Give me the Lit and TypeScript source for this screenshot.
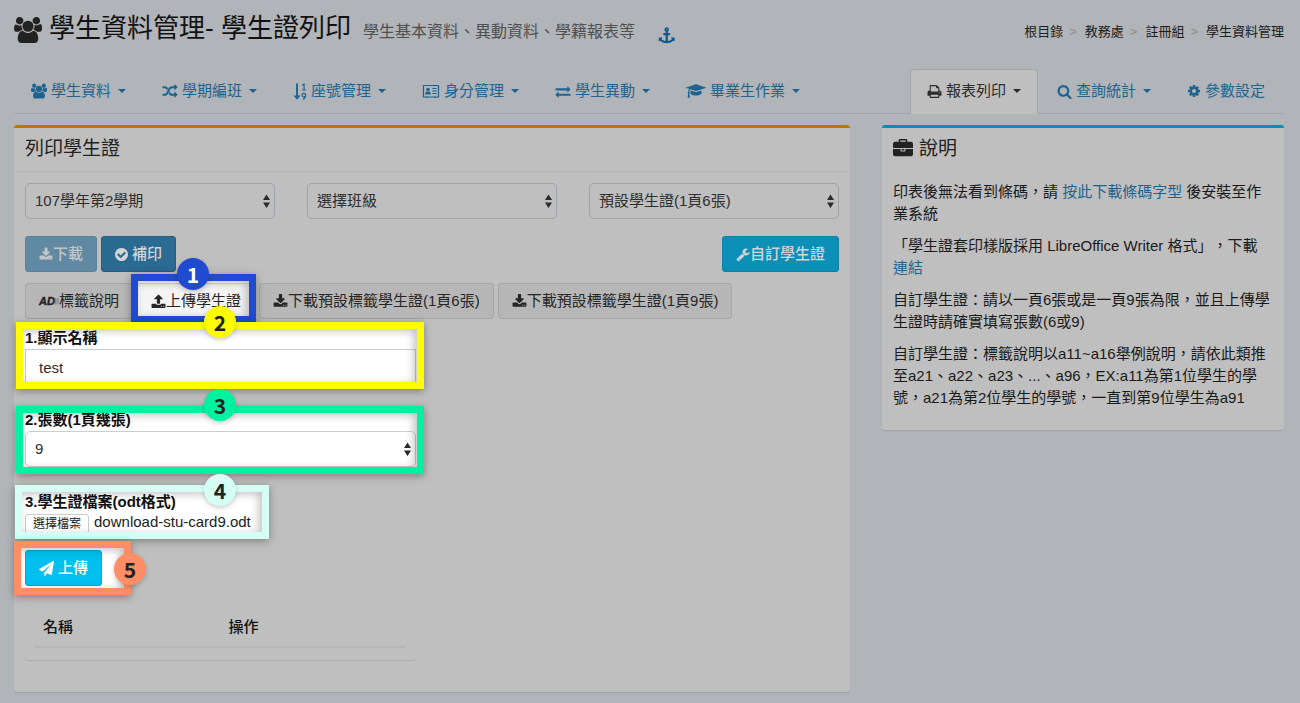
import { LitElement, html, svg, css, nothing } from "lit";
import { customElement, property } from "lit/decorators.js";

interface Glyph {
  w: number;
  h?: number;
  body: unknown;
}

const p = (d: string) => svg`<path d=${d}></path>`;

const GLYPHS: Record<string, Glyph> = {
  users: {
    w: 1920,
    body: p("M593 896q-162 5-265 128h-134q-82 0-138-40.5t-56-118.5q0-353 124-353 6 0 43.5 21t97.5 42.5 119 21.5q67 0 133-23-5 37-5 66 0 159 93 287zm1071 637q0 120-73 189.5t-194 69.5h-874q-121 0-194-69.5t-73-189.5q0-53 3.5-103.5t14-109 26.5-108.5 43-97.5 62-81 85.5-53.5 111.5-20q10 0 43 21.5t73 48 107 48 135 21.5 135-21.5 107-48 73-48 43-21.5q61 0 111.5 20t85.5 53.5 62 81 43 97.5 26.5 108.5 14 109 3.5 103.5zm-1024-1277q0 106-75 181t-181 75-181-75-75-181 75-181 181-75 181 75 75 181zm704 384q0 159-112.5 271.5t-271.5 112.5-271.5-112.5-112.5-271.5 112.5-271.5 271.5-112.5 271.5 112.5 112.5 271.5zm576 225q0 78-56 118.5t-138 40.5h-134q-103-123-265-128 93-128 93-287 0-29-5-66 66 23 133 23 59 0 119-21.5t97.5-42.5 43.5-21q124 0 124 353zm-128-609q0 106-75 181t-181 75-181-75-75-181 75-181 181-75 181 75 75 181z"),
  },
  anchor: {
    w: 1792,
    body: p("M960 256q0-26-19-45t-45-19-45 19-19 45 19 45 45 19 45-19 19-45zm800 960v352q0 22-20 30-8 2-12 2-12 0-23-9l-93-93q-119 143-318.5 226.5t-429.5 83.5-429.5-83.5-318.5-226.5l-93 93q-9 9-23 9-4 0-12-2-20-8-20-30v-352q0-14 9-23t23-9h352q22 0 30 20 8 19-7 35l-100 100q67 91 189.5 153.5t271.5 82.5v-647h-192q-26 0-45-19t-19-45v-128q0-26 19-45t45-19h192v-163q-58-34-93-92.5t-35-128.5q0-106 75-181t181-75 181 75 75 181q0 70-35 128.5t-93 92.5v163h192q26 0 45 19t19 45v128q0 26-19 45t-45 19h-192v647q149-20 271.5-82.5t189.5-153.5l-100-100q-15-16-7-35 8-20 30-20h352q14 0 23 9t9 23z"),
  },
  random: {
    w: 1792,
    body: p("M666 481q-60 92-137 273-22-45-37-72.5t-40.5-63.5-51-56.5-63-35-81.5-14.5h-224q-14 0-23-9t-9-23v-192q0-14 9-23t23-9h224q250 0 410 225zm1126 799q0 14-9 23l-320 320q-9 9-23 9-13 0-22.5-9.5t-9.5-22.5v-192q-32 0-85 .5t-81 1-73-1-71-5-64-10.5-63-18.5-58-28.5-59-40-55-53.5-56-69.5q59-93 136-273 22 45 37 72.5t40.5 63.5 51 56.5 63 35 81.5 14.5h256v-192q0-14 9-23t23-9q12 0 24 10l319 319q9 9 9 23zm0-896q0 14-9 23l-320 320q-9 9-23 9-13 0-22.5-9.5t-9.5-22.5v-192h-256q-48 0-87 15t-69 45-51 61.5-45 77.5q-32 62-78 171-29 66-49.5 111t-54 105-64 100-74 83-90 68.5-106.5 42-128 16.5h-224q-14 0-23-9t-9-23v-192q0-14 9-23t23-9h224q48 0 87-15t69-45 51-61.5 45-77.5q32-62 78-171 29-66 49.5-111t54-105 64-100 74-83 90-68.5 106.5-42 128-16.5h256v-192q0-14 9-23t23-9q12 0 24 10l319 319q9 9 9 23z"),
  },
  sort: {
    w: 13,
    h: 16,
    body: svg`<path d="M2.8 0.5h1.8v11.2h2.4l-3.3 4-3.3-4h2.4z"></path>
      <path d="M8.6 2.2l1.7-1.2v5.6M8.4 6.6h3.8M11.8 11.4a1.7 1.7 0 1 1-3.4 0 1.7 1.7 0 0 1 3.4 0c0 2.400-.8 3.600-2.600 3.700" fill="none" stroke="currentColor" stroke-width="1.1"></path>`,
  },
  idcard: {
    w: 18,
    h: 16,
    body: svg`<path d="M1.500 2.500h15v11.500h-15z" fill="none" stroke="currentColor" stroke-width="1.200" stroke-linejoin="round"></path>
      <circle cx="6" cy="6.600" r="1.800"></circle>
      <path d="M3.200 11.500c0-2 .7-3.100 1.700-3.100.7.5 1.500.5 2.200 0 1 0 1.700 1.100 1.700 3.100z"></path>
      <path d="M10.300 5.500h4.400M10.300 8h4.400M10.300 10.500h4.400" fill="none" stroke="currentColor" stroke-width="1.200"></path>
      <path d="M4 14h2v1h-2zM12 14h2v1h-2z"></path>`,
  },
  exchange: {
    w: 1792,
    body: p("M1792 1184v192q0 13-9.5 22.5t-22.5 9.5h-1376v192q0 13-9.5 22.5t-22.5 9.5q-12 0-24-10l-319-320q-9-9-9-22 0-14 9-23l320-320q9-9 23-9 13 0 22.5 9.5t9.5 22.5v192h1376q13 0 22.5 9.5t9.5 22.5zm0-544q0 14-9 23l-320 320q-9 9-23 9-13 0-22.5-9.5t-9.5-22.5v-192h-1376q-13 0-22.5-9.5t-9.5-22.5v-192q0-13 9.5-22.5t22.5-9.5h1376v-192q0-14 9-23t23-9q12 0 24 10l319 319q9 9 9 23z"),
  },
  graduation: {
    w: 2304,
    body: p("M1774 836l18 316q4 69-82 128t-235 93.5-323 34.5-323-34.5-235-93.5-82-128l18-316 574 181q22 7 48 7t48-7zm530-324q0 23-22 31l-1120 352q-4 1-10 1t-10-1l-652-206q-43 34-71 111.5t-34 178.5q63 36 63 109 0 69-58 107l58 433q2 14-8 25-9 11-24 11h-192q-15 0-24-11-10-11-8-25l58-433q-58-38-58-107 0-73 65-111 11-207 98-330l-333-104q-22-8-22-31t22-31l1120-352q4-1 10-1t10 1l1120 352q22 8 22 31z"),
  },
  print: {
    w: 1792,
    body: p("M448 1536h896v-256h-896v256zm0-640h896v-384h-160q-40 0-68-28t-28-68v-160h-640v640zm1152 64q0-26-19-45t-45-19-45 19-19 45 19 45 45 19 45-19 19-45zm128 0v416q0 13-9.5 22.5t-22.5 9.5h-224v160q0 40-28 68t-68 28h-960q-40 0-68-28t-28-68v-160h-224q-13 0-22.5-9.5t-9.5-22.5v-416q0-79 56.5-135.5t135.5-56.5h64v-544q0-40 28-68t68-28h672q40 0 88 20t76 48l152 152q28 28 48 76t20 88v256h64q79 0 135.5 56.5t56.5 135.5z"),
  },
  search: {
    w: 1792,
    body: p("M1216 832q0-185-131.5-316.5t-316.5-131.5-316.5 131.5-131.5 316.5 131.5 316.5 316.5 131.5 316.5-131.5 131.5-316.5zm512 832q0 52-38 90t-90 38q-54 0-90-38l-343-342q-179 124-399 124-143 0-273.5-55.5t-225-150-150-225-55.5-273.5 55.5-273.5 150-225 225-150 273.5-55.5 273.5 55.5 225 150 150 225 55.5 273.5q0 220-124 399l343 343q37 37 37 90z"),
  },
  cog: {
    w: 1792,
    body: p("M1152 896q0-106-75-181t-181-75-181 75-75 181 75 181 181 75 181-75 75-181zm512-109v222q0 12-8 23t-20 13l-185 28q-19 54-39 91 35 50 107 138 10 12 10 25t-9 23q-27 37-99 108t-94 71q-12 0-26-9l-138-108q-44 23-91 38-16 136-29 186-7 28-36 28h-222q-14 0-24.500-8.500t-11.500-21.500l-28-184q-49-16-90-37l-141 107q-10 9-25 9-14 0-25-11-126-114-165-168-7-10-7-23 0-12 8-23 15-21 51-66.500t54-70.500q-27-50-41-99l-183-27q-13-2-21-12.500t-8-23.500v-222q0-12 8-23t19-13l186-28q14-46 39-92-40-57-107-138-10-12-10-24 0-10 9-23 26-36 98.500-107.500t94.500-71.500q13 0 26 10l138 107q44-23 91-38 16-136 29-186 7-28 36-28h222q14 0 24.500 8.500t11.500 21.500l28 184q49 16 90 37l142-107q9-9 24-9 13 0 25 10 129 119 165 170 7 8 7 22 0 12-8 23-15 21-51 66.500t-54 70.500q26 50 41 98l183 28q13 2 21 12.500t8 23.500z"),
  },
  download: {
    w: 1792,
    body: p("M1344 1344q0-26-19-45t-45-19-45 19-19 45 19 45 45 19 45-19 19-45zm256 0q0-26-19-45t-45-19-45 19-19 45 19 45 45 19 45-19 19-45zm128-224v320q0 40-28 68t-68 28h-1472q-40 0-68-28t-28-68v-320q0-40 28-68t68-28h465l135 136q58 56 136 56t136-56l136-136h464q40 0 68 28t28 68zm-325-569q17 41-14 70l-448 448q-18 19-45 19t-45-19l-448-448q-31-29-14-70 17-39 59-39h256v-448q0-26 19-45t45-19h256q26 0 45 19t19 45v448h256q42 0 59 39z"),
  },
  upload: {
    w: 1792,
    body: p("M1344 1472q0-26-19-45t-45-19-45 19-19 45 19 45 45 19 45-19 19-45zm256 0q0-26-19-45t-45-19-45 19-19 45 19 45 45 19 45-19 19-45zm128-224v320q0 40-28 68t-68 28h-1472q-40 0-68-28t-28-68v-320q0-40 28-68t68-28h427q21 56 70.500 92t110.500 36h256q61 0 110.500-36t70.500-92h427q40 0 68 28t28 68zm-325-648q-17 40-59 40h-256v448q0 26-19 45t-45 19h-256q-26 0-45-19t-19-45v-448h-256q-42 0-59-40-17-39 14-69l448-448q18-19 45-19t45 19l448 448q31 30 14 69z"),
  },
  check: {
    w: 1536,
    h: 1536,
    body: svg`<path transform="translate(-128 -128)" d="M1412 734q0-28-18-46l-91-90q-19-19-45-19t-45 19l-408 407-226-226q-19-19-45-19t-45 19l-91 90q-18 18-18 46 0 27 18 45l362 362q19 19 45 19 27 0 46-19l543-543q18-18 18-45zm252 162q0 209-103 385.500t-279.500 279.500-385.500 103-385.500-103-279.500-279.500-103-385.500 103-385.500 279.500-279.500 385.500-103 385.500 103 279.500 279.500 103 385.500z"></path>`,
  },
  wrench: {
    w: 1792,
    body: p("M448 1472q0-26-19-45t-45-19-45 19-19 45 19 45 45 19 45-19 19-45zm644-420l-682 682q-37 37-90 37-52 0-91-37l-106-108q-38-36-38-90 0-53 38-91l681-681q39 98 114.500 173.500t173.500 114.500zm634-435q0 39-23 106-47 134-164.500 217.500t-258.500 83.500q-185 0-316.500-131.500t-131.500-316.500 131.500-316.500 316.500-131.500q58 0 121.500 16.500t107.500 46.500q16 11 16 28t-16 28l-293 169v224l193 107q5-3 79-48.500t135.500-81 70.500-35.500q15 0 23.500 10t8.500 25z"),
  },
  briefcase: {
    w: 1792,
    body: p("M640 256h512v-128h-512v128zm1152 640v480q0 66-47 113t-113 47h-1472q-66 0-113-47t-47-113v-480h672v160q0 26 19 45t45 19h320q26 0 45-19t19-45v-160h672zm-768 0v128h-256v-128h256zm768-480v384h-1792v-384q0-66 47-113t113-47h352v-160q0-40 28-68t68-28h576q40 0 68 28t28 68v160h352q66 0 113 47t47 113z"),
  },
  plane: {
    w: 1792,
    body: p("M1764 11q33 24 27 64l-256 1536q-5 29-32 45-14 8-31 8-11 0-24-5l-453-185-242 295q-18 23-49 23-13 0-22-4-19-7-30.500-23.500t-11.500-36.500v-349l864-1059-1069 925-395-162q-37-14-40-55-2-40 32-59l1664-960q15-9 32-9 20 0 36 11z"),
  },
  ad: {
    w: 20,
    h: 14,
    body: svg`<text x="0" y="11" font-family="Liberation Sans" font-size="11" font-weight="700" font-style="italic" stroke="currentColor" stroke-width=".5">AD</text>
      <path d="M16.500 4q1.200 3 0 6.500M18.500 4q1.200 3 0 6.500" fill="none" stroke="currentColor" stroke-width="1.200" opacity=".35"></path>`,
  },
};

@customElement("ui-icon")
class UiIcon extends LitElement {
  @property() name = "";

  static styles = css`
    :host { display: inline-flex; flex: none; }
    svg { width: 100%; height: 100%; fill: currentColor; overflow: visible; }
  `;

  render() {
    const g = GLYPHS[this.name];
    return g
      ? html`<svg viewBox="0 0 ${g.w} ${g.h ?? 1792}" aria-hidden="true">${g.body}</svg>`
      : nothing;
  }
}

interface Tab {
  icon: string;
  label: string;
  menu: boolean;
  active?: boolean;
}

const MAIN_TABS: Tab[] = [
  { icon: "users", label: "學生資料", menu: true },
  { icon: "random", label: "學期編班", menu: true },
  { icon: "sort", label: "座號管理", menu: true },
  { icon: "idcard", label: "身分管理", menu: true },
  { icon: "exchange", label: "學生異動", menu: true },
  { icon: "graduation", label: "畢業生作業", menu: true },
];

const TOOL_TABS: Tab[] = [
  { icon: "print", label: "報表列印", menu: true, active: true },
  { icon: "search", label: "查詢統計", menu: true },
  { icon: "cog", label: "參數設定", menu: false },
];

const CRUMBS = ["根目錄", "教務處", "註冊組", "學生資料管理"];

@customElement("app-root")
class AppRoot extends LitElement {
  static styles = css`
    :host {
      display: block;
      min-height: 100vh;
      box-sizing: border-box;
      padding: 13px 16px 10px 14px;
      background: #b1b4b8;
      color: #222;
      font: 15px/22px "Liberation Sans", "Noto Sans CJK TC", sans-serif;
      text-spacing-trim: space-all;
    }
    *, *::before { box-sizing: border-box; }
    h1, h2, p, ul, ol { margin: 0; padding: 0; list-style: none; font-weight: 400; }
    a { color: #1e6390; text-decoration: none; }
    button, input, select { font: inherit; color: inherit; margin: 0; }

    .head { display: flex; align-items: center; gap: 7px; padding-bottom: 22px; }
    .title-icon { width: 28px; height: 26px; }
    .title { font-size: 26px; line-height: 34px; margin: -2px 0; color: #111; display: flex; align-items: baseline; gap: 12px; }
    .title small { font-size: 16px; color: #505050; }
    .anchor { margin: 9px 0 0 17px; height: 16px; line-height: 16px; display: flex; }
    .anchor ui-icon { width: 16px; height: 16px; color: #0f5a8c; }
    .crumbs { margin-left: auto; display: flex; font-size: 13px; padding-top: 4px; }
    .crumbs a { color: #1c1c1c; }
    .crumbs li + li::before { content: ">"; color: #8c8c8c; padding: 0 8px 0 6px; }

    .tabs { display: flex; justify-content: space-between; border-bottom: 1px solid #a3a5a9; margin-bottom: 11px; }
    .tabs ul { display: flex; }
    .tab {
      display: flex; align-items: center; gap: 4px;
      padding: 10px 16px 12px; border: 1px solid transparent; border-bottom: 0;
      border-radius: 4px 4px 0 0; margin: 0 2px -1px 0; height: 45px;
    }
    .tab.active { background: #bfbfbf; border-color: #a3a5a9; color: #2c2c2c; }
    .tab ui-icon { width: 16px; height: 15px; }
    .tab .i-users { height: 16px; }
    .tab .i-print, .tab .i-search { width: 15px; }
    .tab .i-sort { width: 14px; height: 17px; }
    .tab .i-cog { width: 14px; height: 16px; }
    .tab .i-idcard { width: 18px; height: 16px; }
    .tab .i-graduation { width: 20px; height: 16px; }
    .caret { border: 4px solid transparent; border-top-color: currentColor; border-bottom: 0; margin-left: 3px; }

    .layout { display: grid; grid-template-columns: repeat(12, minmax(0, 1fr)); column-gap: 32px; align-items: start; }
    .card { background: #bfbfbf; border-top: 3px solid #b8760b; border-radius: 3px; box-shadow: 0 1px 1px rgba(0, 0, 0, .1); }
    .main { grid-column: span 8; padding-bottom: 32px; }
    .aside { grid-column: span 4; border-top-color: #0090b7; padding-bottom: 21px; }
    .card-title { display: flex; align-items: center; gap: 6px; font-size: 19px; line-height: 24px; padding: 9px 11px 10px; }
    .card-title ui-icon { width: 20px; height: 20px; }
    .main .card-title { border-bottom: 1px solid #b6b6b6; }
    .body { padding: 11px 11px 0; }
    .aside .body { display: grid; gap: 10px; padding-top: 10px; color: #1a1a1a; }

    .fields { display: grid; grid-template-columns: repeat(3, minmax(0, 1fr)); gap: 32px; margin-bottom: 17px; }
    .select { display: block; position: relative; }
    .select svg { position: absolute; right: 5px; top: 11px; width: 7px; height: 14px; pointer-events: none; fill: #2a2a2a; }
    .control {
      appearance: none; display: block; width: 100%; height: 36px; padding: 0 9px;
      border: 1px solid #9ea1a8; border-radius: 5px; background: transparent; color: #2e2e2e; outline: 0;
    }
    .lit .control { border-color: #c9cdd5; }
    input.control { padding: 0 13px; border-radius: 0; }

    .row { display: flex; gap: 4px; margin-bottom: 11px; }
    .btn {
      display: inline-flex; align-items: center; height: 36px; padding: 0 13px; white-space: nowrap;
      border: 1px solid #a6a6a6; border-radius: 3px; background: #b7b7b7; color: #262626;
    }
    .btn ui-icon { width: 15px; height: 15px; }
    .btn .i-ad { width: 20px; height: 14px; }
    .btn .i-narrow { width: 14px; }
    .btn .i-check { width: 13px; height: 13px; }
    .btn.primary, .btn.info { color: #d4d4d4; font-weight: 500; }
    .btn.primary { background: #2b6a91; border-color: #275d7f; }
    .btn.primary:disabled { background: #6089a3; border-color: #5c8199; color: #c6c6c6; }
    .btn.info { background: #0d90b7; border-color: #0a83a7; }
    .btn.spaced { gap: 4px; }
    .push { margin-left: auto; }

    .lit { position: relative; --in: -5px -8px -4px -9px; --mark: #fffb00; }
    .lit::before { content: ""; position: absolute; inset: var(--in); background: #fff; }
    .lit > * { position: relative; }
    .lit > .mark {
      position: absolute; inset: var(--in); border: 7px solid var(--mark); pointer-events: none;
      box-shadow: 0 2px 8px rgba(0, 0, 0, .35), inset -3px 2px 8px rgba(0, 0, 0, .25);
    }
    .lit > .badge {
      position: absolute; left: 179px; top: -21px; width: 32px; height: 32px; border-radius: 50%;
      background: var(--mark); color: #222; font: 700 21px/32px "Noto Sans CJK TC", sans-serif; text-align: center;
      box-shadow: 0 2px 5px rgba(0, 0, 0, .2);
    }
    .lit .btn { background: #f4f4f4; border-color: #ddd; }
    .lit .btn.info { background: #00c0ef; border-color: #00acd6; color: #fff; }
    .lit.one { --in: -9px -1px -4px -6px; --mark: #204bd0; }
    .lit.one > .badge { left: 40px; top: -25px; color: #fff; }
    .lit.three { --in: -3px -8px -7px -9px; --mark: #00f2a0; }
    .lit.three > .badge { top: -20px; }
    .lit.four { --in: -6px -18px -6px -10px; --mark: #d5fff5; width: fit-content; }
    .lit.four > .badge { top: -17px; }
    .lit.five { --in: -9px -29px -9px -11px; --mark: #ff8e66; width: fit-content; }
    .lit.five > .badge { left: 89px; top: 3px; }

    .upload { display: grid; width: calc(50% - 16px); margin-top: -3px; }
    .group { margin-bottom: 24px; }
    .group label.name { display: block; font-weight: 700; color: #111; }
    .group.four { margin-bottom: 17px; }
    .file { display: flex; align-items: center; gap: 5px; height: 20px; color: #222; }
    .file label {
      margin-top: 2px; border: 1px solid #ccc; border-radius: 3px; background: #fff; padding: 0 7px;
      font-size: 12px; line-height: 18px;
    }
    .file output { line-height: 16px; padding-bottom: 2px; }
    .hidden { position: absolute; width: 1px; height: 1px; opacity: 0; }

    .list { width: calc(50% - 16px); margin-top: 12px; padding: 10px 10px 12px; border-radius: 3px; box-shadow: 0 1px 1px rgba(0, 0, 0, .1); }
    table { width: 100%; border-collapse: collapse; table-layout: fixed; }
    th { text-align: left; font-weight: 500; color: #111; padding: 8px; border-bottom: 2px solid #b6b6b6; }
  `;

  private tab(t: Tab) {
    return html`<li>
      <a class="tab ${t.active ? "active" : ""}" href="#">
        <ui-icon class="i-${t.icon}" name=${t.icon}></ui-icon>
        <span>${t.label}</span>
        ${t.menu ? html`<span class="caret"></span>` : nothing}
      </a>
    </li>`;
  }

  private select(id: string, value: string, label?: string) {
    return html`<span class="select">
      <select class="control" id=${id} aria-label=${label ?? nothing}>
        <option>${value}</option>
      </select>
      <svg viewBox="0 0 7 14" aria-hidden="true"><path d="M0 6L3.500 0.500 7 6zM0 8.500h7L3.500 14z"></path></svg>
    </span>`;
  }

  private mark(n: number) {
    return html`<span class="mark"></span><span class="badge">${n}</span>`;
  }

  render() {
    return html`
      <header class="head">
        <ui-icon class="title-icon" name="users"></ui-icon>
        <h1 class="title">學生資料管理- 學生證列印 <small>學生基本資料、異動資料、學籍報表等</small></h1>
        <a class="anchor" href="#" aria-label="anchor"><ui-icon name="anchor"></ui-icon></a>
        <ol class="crumbs">${CRUMBS.map((c) => html`<li><a href="#">${c}</a></li>`)}</ol>
      </header>

      <nav class="tabs">
        <ul>${MAIN_TABS.map((t) => this.tab(t))}</ul>
        <ul>${TOOL_TABS.map((t) => this.tab(t))}</ul>
      </nav>

      <div class="layout">
        <main class="card main">
          <h2 class="card-title">列印學生證</h2>
          <div class="body">
            <div class="fields">
              ${this.select("term", "107學年第2學期", "學期")}
              ${this.select("class", "選擇班級", "班級")}
              ${this.select("card", "預設學生證(1頁6張)", "學生證")}
            </div>
            <div class="row">
              <button class="btn primary" disabled><ui-icon class="i-narrow" name="download"></ui-icon>下載</button>
              <button class="btn primary spaced"><ui-icon class="i-check" name="check"></ui-icon>補印</button>
              <button class="btn info push"><ui-icon class="i-narrow" name="wrench"></ui-icon>自訂學生證</button>
            </div>
            <div class="row">
              <button class="btn"><ui-icon class="i-ad" name="ad"></ui-icon>標籤說明</button>
              <div class="lit one">
                <button class="btn"><ui-icon name="upload"></ui-icon>上傳學生證</button>
                ${this.mark(1)}
              </div>
              <button class="btn"><ui-icon name="download"></ui-icon>下載預設標籤學生證(1頁6張)</button>
              <button class="btn"><ui-icon name="download"></ui-icon>下載預設標籤學生證(1頁9張)</button>
            </div>
            <form class="upload" @submit=${(e: Event) => e.preventDefault()}>
              <div class="group lit two">
                <label class="name" for="name">1.顯示名稱</label>
                <input class="control" id="name" type="text" value="test" />
                ${this.mark(2)}
              </div>
              <div class="group lit three">
                <label class="name" for="count">2.張數(1頁幾張)</label>
                ${this.select("count", "9")}
                ${this.mark(3)}
              </div>
              <div class="group lit four">
                <label class="name" for="file">3.學生證檔案(odt格式)</label>
                <div class="file">
                  <input class="hidden" id="file" type="file" accept=".odt" />
                  <label for="file">選擇檔案</label>
                  <output for="file">download-stu-card9.odt</output>
                </div>
                ${this.mark(4)}
              </div>
              <div class="lit five">
                <button class="btn info spaced"><ui-icon name="plane"></ui-icon>上傳</button>
                ${this.mark(5)}
              </div>
            </form>
            <div class="list">
              <table>
                <thead><tr><th scope="col">名稱</th><th scope="col">操作</th></tr></thead>
              </table>
            </div>
          </div>
        </main>

        <aside class="card aside">
          <h2 class="card-title"><ui-icon name="briefcase"></ui-icon>說明</h2>
          <div class="body">
            <p>印表後無法看到條碼，請 <a href="#">按此下載條碼字型</a> 後安裝至作業系統</p>
            <p>「學生證套印樣版採用 LibreOffice Writer 格式」，下載 <a href="#">連結</a></p>
            <p>自訂學生證：請以一頁6張或是一頁9張為限，並且上傳學生證時請確實填寫張數(6或9)</p>
            <p>自訂學生證：標籤說明以a11~a16舉例說明，請依此類推至a21、a22、a23、...、a96，EX:a11為第1位學生的學號，a21為第2位學生的學號，一直到第9位學生為a91</p>
          </div>
        </aside>
      </div>
    `;
  }
}
